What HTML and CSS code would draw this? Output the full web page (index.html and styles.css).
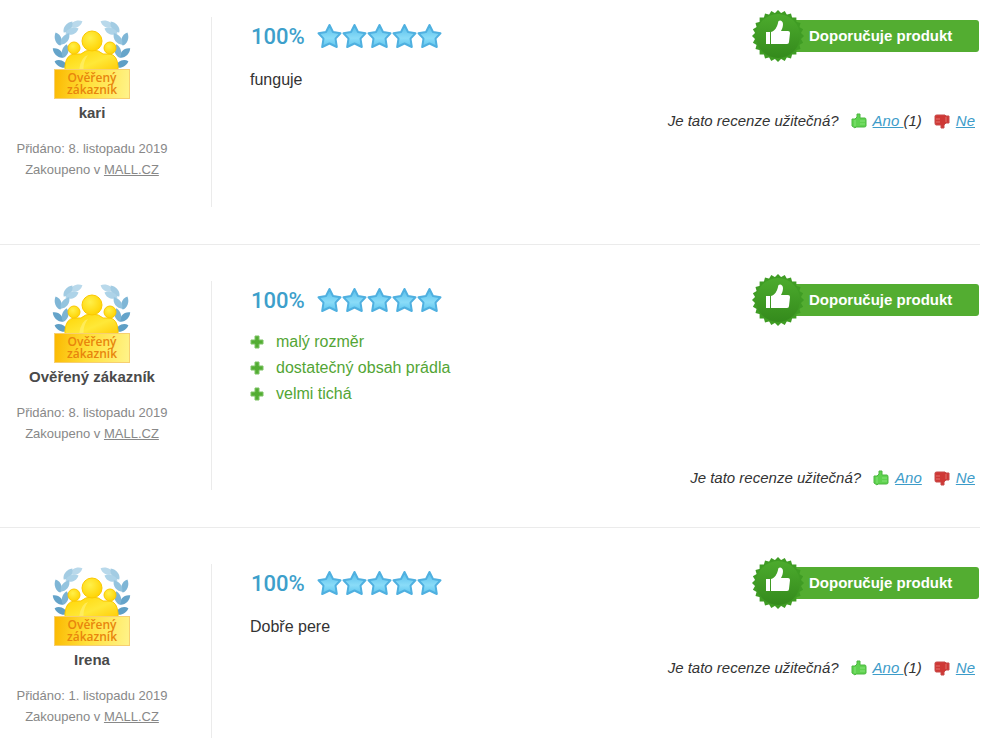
FILE: index.html
```html
<!DOCTYPE html>
<html lang="cs">
<head>
    <meta charset="UTF-8">
    <meta name="viewport" content="width=device-width, initial-scale=1.0">
    <title>Recenze produktu</title>
    <link rel="stylesheet" href="styles.css">
</head>
<body>
    <!-- Shared icons -->
    <svg class="sprite" aria-hidden="true">
        <defs>
            <linearGradient id="starFill" x1="0" y1="0" x2="0" y2="1">
                <stop offset="0" stop-color="#55bdea"/>
                <stop offset="0.6" stop-color="#8adcf8"/>
                <stop offset="1" stop-color="#5cc4ee"/>
            </linearGradient>
            <radialGradient id="headFill" cx="0.4" cy="0.35" r="0.7">
                <stop offset="0" stop-color="#fff04a"/>
                <stop offset="1" stop-color="#ffd200"/>
            </radialGradient>
            <linearGradient id="bodyFill" x1="0" y1="0" x2="1" y2="1">
                <stop offset="0" stop-color="#ffd400"/>
                <stop offset="0.55" stop-color="#ffe838"/>
                <stop offset="1" stop-color="#ffc800"/>
            </linearGradient>
            <linearGradient id="sealFill" x1="0" y1="0" x2="0" y2="1">
                <stop offset="0" stop-color="#4cab2d"/>
                <stop offset="1" stop-color="#348a1c"/>
            </linearGradient>
            <path id="leaf" d="M0 -7 C5 -3 4 4 0 7 C-4 4 -4 -3 0 -7Z"/>
            <g id="wreath">
                <use href="#leaf" transform="translate(24 5) rotate(66)" fill="#b9d9eb"/>
                <use href="#leaf" transform="translate(16 8) rotate(38)" fill="#a3cce3"/>
                <use href="#leaf" transform="translate(20 12) rotate(68)" fill="#add3e8"/>
                <use href="#leaf" transform="translate(6 20) rotate(-20)" fill="#7fb6d6"/>
                <use href="#leaf" transform="translate(13 20) rotate(36)" fill="#94c4df"/>
                <use href="#leaf" transform="translate(6 34) rotate(-48)" fill="#65a4ca"/>
                <use href="#leaf" transform="translate(13 32) rotate(14)" fill="#7cb3d3"/>
                <use href="#leaf" transform="translate(9 45) rotate(-66)" fill="#5f9fc5"/>
            </g>
        </defs>
        <symbol id="icon-verified" viewBox="0 0 80 50">
            <use href="#wreath"/>
            <use href="#wreath" transform="translate(79 0) scale(-1 1)"/>
            <path d="M13 54V47Q14 36 22 35H29Q33 31 40 31T51 35H58Q65 36 66 47V54Z" fill="url(#bodyFill)" stroke="#fbc800"/>
            <path d="M27 54Q28 38 36 36Q30 44 32 54Z" fill="#fff27a" opacity="0.6"/>
            <circle cx="22" cy="29" r="6" fill="url(#headFill)" stroke="#fbc800"/>
            <circle cx="58" cy="29" r="6" fill="url(#headFill)" stroke="#fbc800"/>
            <circle cx="40" cy="22" r="10" fill="url(#headFill)" stroke="#fbc800"/>
        </symbol>
        <symbol id="icon-star" viewBox="0 0 25 26">
            <path d="M12.500 2L16 9L23.500 10.300L18.500 15.600L19.800 24L12.500 20.500L5.200 24L6.500 15.600L1.500 10.300L9 9Z" fill="url(#starFill)" stroke="#4fb0e0" stroke-width="2" stroke-linejoin="round"/>
        </symbol>
        <symbol id="icon-seal" viewBox="-26 -26 52 52">
            <g fill="#3f9c24">
                <path id="tooth" d="M0 -26L26 0L0 26L-26 0Z"/>
                <use href="#tooth" transform="rotate(15)"/>
                <use href="#tooth" transform="rotate(30)"/>
                <use href="#tooth" transform="rotate(45)"/>
                <use href="#tooth" transform="rotate(60)"/>
                <use href="#tooth" transform="rotate(75)"/>
            </g>
            <circle r="22" fill="url(#sealFill)"/>
            <path d="M-12 -4H-8V8H-12ZM-7 -4C-3 -5 -1 -9 0 -13C0 -17 5 -16 5 -12C5 -9 4 -7 3 -5H10Q12 -5 12 -3L11 6Q11 8 9 8H-7Z" fill="#fff"/>
        </symbol>
        <symbol id="icon-up" viewBox="0 0 16 16">
            <path d="M1 6H4L6 4V1H9V5H14Q15 5 15 7V13Q15 14 13 14H5L4 15L1 13Z" fill="#5fd24f" stroke="#4cb741"/>
            <path d="M4 7V13M9 8H14M9 11H14" stroke="#86e278" fill="none"/>
        </symbol>
        <symbol id="icon-down" viewBox="0 0 16 16">
            <path d="M1 3Q1 2 3 2H11L12 3H15V10H12L10 12V15H7V12H2Q1 12 1 10Z" fill="#cf3835" stroke="#c74a4a"/>
            <path d="M12 4V9M2 6H6M2 9H6" stroke="#e0706c" fill="none"/>
        </symbol>
        <symbol id="icon-plus" viewBox="0 0 14 14">
            <path d="M5 1H9V5H13V9H9V13H5V9H1V5H5Z" fill="#53ad33" stroke="#7cc264" stroke-width="1"/>
        </symbol>
    </svg>

    <main class="reviews">
        <article class="review">
            <div class="author">
                <div class="verified">
                    <svg><use href="#icon-verified"/></svg>
                    <span>Ověřený<br>zákazník</span>
                </div>
                <strong class="name">kari</strong>
                <p class="meta">Přidáno: 8. listopadu 2019<br>Zakoupeno v <a href="#">MALL.CZ</a></p>
            </div>
            <div class="content">
                <div class="top">
                    <span class="percent">100%</span>
                    <div class="stars">
                        <svg><use href="#icon-star"/></svg>
                        <svg><use href="#icon-star"/></svg>
                        <svg><use href="#icon-star"/></svg>
                        <svg><use href="#icon-star"/></svg>
                        <svg><use href="#icon-star"/></svg>
                    </div>
                    <div class="recommend"><svg class="seal"><use href="#icon-seal"/></svg>Doporučuje produkt</div>
                </div>
                <p class="text">funguje</p>
                <div class="helpful">
                    <span>Je tato recenze užitečná?</span>
                    <span class="vote"><svg><use href="#icon-up"/></svg><span><a href="#">Ano </a>(1)</span></span>
                    <span class="vote"><svg><use href="#icon-down"/></svg><a href="#">Ne</a></span>
                </div>
            </div>
        </article>

        <article class="review">
            <div class="author">
                <div class="verified">
                    <svg><use href="#icon-verified"/></svg>
                    <span>Ověřený<br>zákazník</span>
                </div>
                <strong class="name">Ověřený zákazník</strong>
                <p class="meta">Přidáno: 8. listopadu 2019<br>Zakoupeno v <a href="#">MALL.CZ</a></p>
            </div>
            <div class="content">
                <div class="top">
                    <span class="percent">100%</span>
                    <div class="stars">
                        <svg><use href="#icon-star"/></svg>
                        <svg><use href="#icon-star"/></svg>
                        <svg><use href="#icon-star"/></svg>
                        <svg><use href="#icon-star"/></svg>
                        <svg><use href="#icon-star"/></svg>
                    </div>
                    <div class="recommend"><svg class="seal"><use href="#icon-seal"/></svg>Doporučuje produkt</div>
                </div>
                <ul class="pros">
                    <li><svg><use href="#icon-plus"/></svg>malý rozměr</li>
                    <li><svg><use href="#icon-plus"/></svg>dostatečný obsah prádla</li>
                    <li><svg><use href="#icon-plus"/></svg>velmi tichá</li>
                </ul>
                <div class="helpful">
                    <span>Je tato recenze užitečná?</span>
                    <span class="vote"><svg><use href="#icon-up"/></svg><a href="#">Ano</a></span>
                    <span class="vote"><svg><use href="#icon-down"/></svg><a href="#">Ne</a></span>
                </div>
            </div>
        </article>

        <article class="review">
            <div class="author">
                <div class="verified">
                    <svg><use href="#icon-verified"/></svg>
                    <span>Ověřený<br>zákazník</span>
                </div>
                <strong class="name">Irena</strong>
                <p class="meta">Přidáno: 1. listopadu 2019<br>Zakoupeno v <a href="#">MALL.CZ</a></p>
            </div>
            <div class="content">
                <div class="top">
                    <span class="percent">100%</span>
                    <div class="stars">
                        <svg><use href="#icon-star"/></svg>
                        <svg><use href="#icon-star"/></svg>
                        <svg><use href="#icon-star"/></svg>
                        <svg><use href="#icon-star"/></svg>
                        <svg><use href="#icon-star"/></svg>
                    </div>
                    <div class="recommend"><svg class="seal"><use href="#icon-seal"/></svg>Doporučuje produkt</div>
                </div>
                <p class="text">Dobře pere</p>
                <div class="helpful">
                    <span>Je tato recenze užitečná?</span>
                    <span class="vote"><svg><use href="#icon-up"/></svg><span><a href="#">Ano </a>(1)</span></span>
                    <span class="vote"><svg><use href="#icon-down"/></svg><a href="#">Ne</a></span>
                </div>
            </div>
        </article>
    </main>
</body>
</html>
```

FILE: styles.css
```css
body {
    margin: 0;
    background-color: #fff;
    color: #333;
    font-family: Arial, "Liberation Sans", sans-serif;
    font-size: 16px;
}

p, ul {
    margin: 0;
    padding: 0;
}

a {
    color: #3d9cc9;
}

.sprite {
    position: absolute;
    width: 0;
    height: 0;
}

.reviews {
    height: 100vh;
    margin-right: 13px;
    overflow: hidden;
}

.review {
    display: flex;
    padding: 36px 0 37px;
    border-bottom: 1px solid #ebebeb;
}

.review:first-child {
    padding-top: 17px;
}

/* Left column */
.author {
    display: flex;
    flex-direction: column;
    align-items: center;
    flex: 0 0 184px;
    min-height: 188px;
    padding: 2px 27px 0 0;
    border-right: 1px solid #ebebeb;
}

.verified {
    display: flex;
    flex-direction: column;
    align-items: center;
    margin-bottom: 4px;
}

.verified svg {
    width: 80px;
    height: 50px;
}

.verified span {
    box-sizing: border-box;
    width: 76px;
    height: 30px;
    padding-top: 2px;
    border: 1px solid #f7cf70;
    background: linear-gradient(100deg, #fbb800, #ffe03a 45%, #fff38a);
    color: #e8850c;
    font-family: "Open Sans", "Noto Sans", sans-serif;
    font-size: 12px;
    font-weight: 600;
    line-height: 12px;
    text-align: center;
}

.name {
    color: #4a4a4a;
    font-size: 15px;
    line-height: 20px;
}

.meta {
    margin-top: 15px;
    color: #888;
    font-size: 13px;
    line-height: 21px;
    text-align: center;
}

.meta a {
    color: #888;
}

/* Right column */
.content {
    display: flex;
    flex: 1;
    flex-direction: column;
    padding-left: 38px;
}

.top {
    display: flex;
    align-items: center;
    height: 38px;
    margin-bottom: 10px;
}

.percent {
    width: 66px;
    padding-left: 1px;
    color: #3d9fcb;
    font-family: Roboto, Arial, sans-serif;
    font-size: 22px;
    font-weight: 500;
}

.stars {
    display: flex;
}

.stars svg {
    width: 25px;
    height: 26px;
}

.recommend {
    position: relative;
    box-sizing: border-box;
    width: 202px;
    margin-left: auto;
    margin-right: 1px;
    padding-left: 32px;
    border-radius: 3px;
    background-color: #53ad31;
    color: #fff;
    font-size: 15px;
    font-weight: bold;
    line-height: 32px;
}

/* Seal hangs over the left edge of the bar */
.seal {
    position: absolute;
    top: -10px;
    left: -25px;
    width: 52px;
    height: 52px;
}

.text {
    padding-top: 2px;
    line-height: 26px;
}

.pros {
    margin-bottom: 43px;
    color: #53a535;
    line-height: 26px;
    list-style: none;
}

.pros li {
    display: flex;
    align-items: center;
    gap: 12px;
}

.pros svg {
    width: 14px;
    height: 14px;
}

.helpful {
    display: flex;
    justify-content: flex-end;
    gap: 12px;
    margin-top: 16px;
    padding-right: 5px;
    font-size: 15px;
    font-style: italic;
    line-height: 24px;
}

.vote {
    display: flex;
    align-items: center;
    gap: 6px;
}

.vote svg {
    width: 16px;
    height: 16px;
}
```
